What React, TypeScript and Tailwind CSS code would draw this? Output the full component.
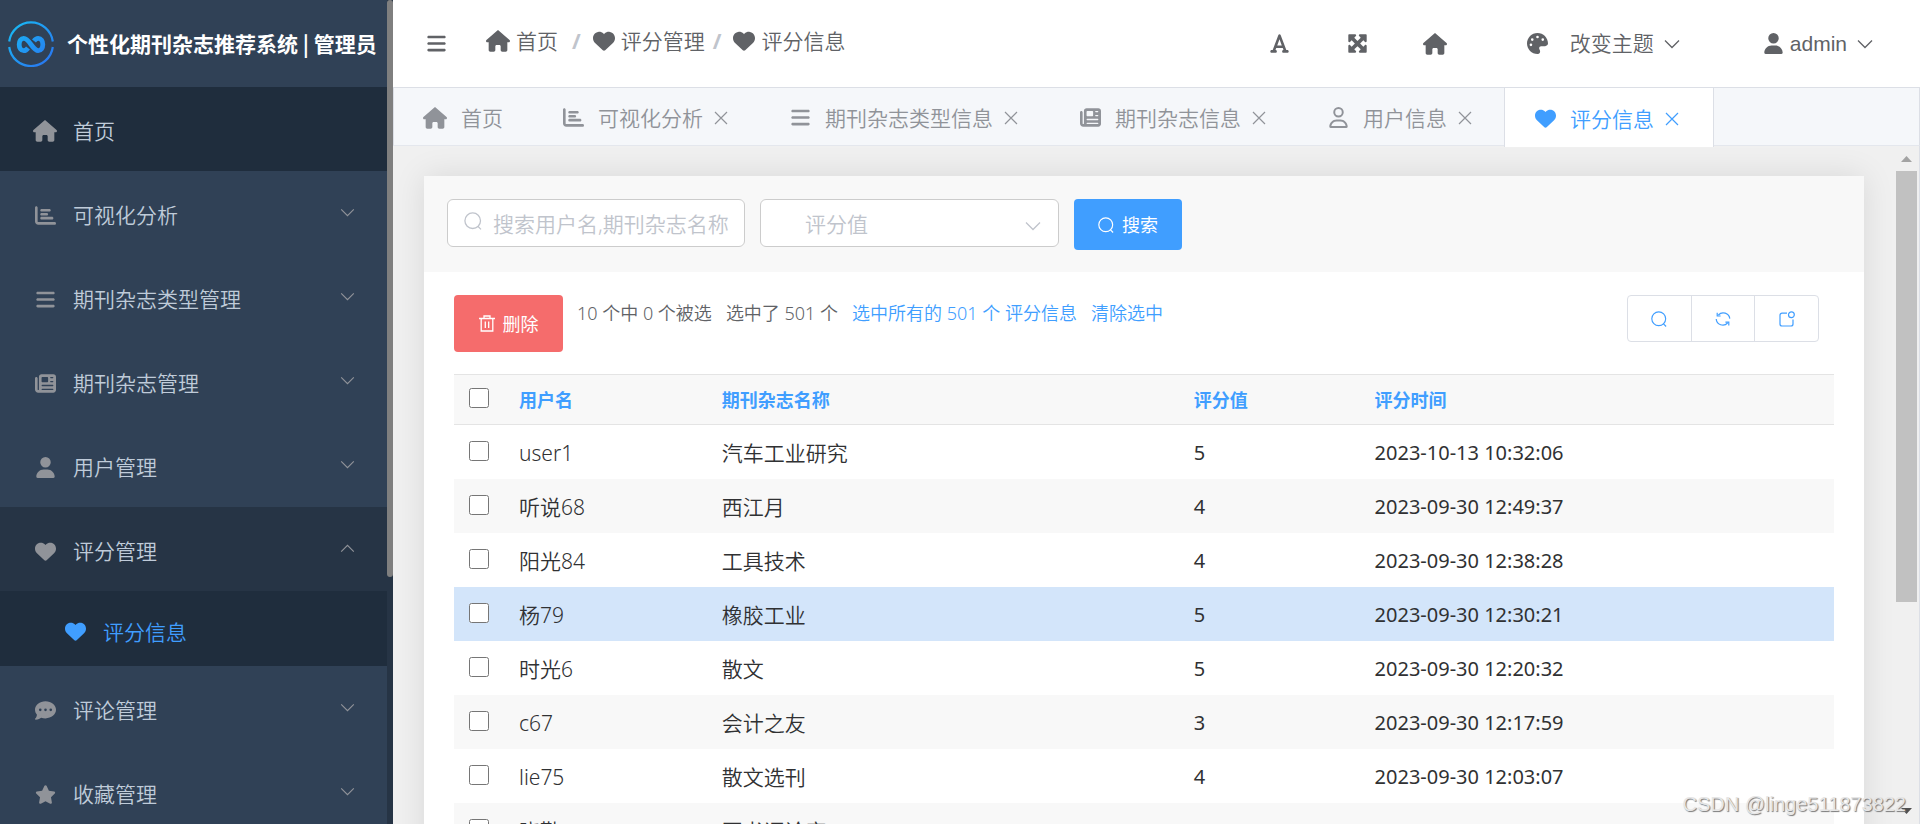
import React from "react";
import {
  FaHouse, FaChartBar, FaBars, FaNewspaper, FaUser, FaHeart, FaCommentDots,
  FaStar, FaFont, FaMaximize, FaPalette, FaRegUser,
} from "react-icons/fa6";
import type { IconType } from "react-icons";

function Home() {
  return <FaHouse className="h-6 w-6 shrink-0" />;
}

function Chevron({ className, up }: { className: string; up?: boolean }) {
  return (
    <svg viewBox="0 0 16 10" fill="none" stroke="currentColor" strokeWidth="1.3" className={className} aria-hidden="true">
      <path d={up ? "M1 8.5 8 1.5l7 7" : "M1 1.5l7 7 7-7"} />
    </svg>
  );
}

function Cross() {
  return (
    <svg viewBox="0 0 14 14" fill="none" stroke="currentColor" strokeWidth="1.2" className="h-3.5 w-3.5" aria-hidden="true">
      <path d="M1 1l12 12M13 1 1 13" />
    </svg>
  );
}

function Magnifier({ className }: { className: string }) {
  return (
    <svg viewBox="0 0 18 18" fill="none" stroke="currentColor" strokeWidth="1.3" className={className} aria-hidden="true">
      <circle cx="8.7" cy="8.7" r="7.8" />
      <path d="M13.8 14.2 17 17.4" />
    </svg>
  );
}

function Trash() {
  return (
    <svg viewBox="0 0 16 17" fill="none" stroke="currentColor" strokeWidth="1.3" className="h-[17px] w-4" aria-hidden="true">
      <path d="M0 3.5h16M5 3.5V1h6v2.5M2.2 3.5V16h11.6V3.5M6.3 6.5v6.5M9.7 6.5v6.5" />
    </svg>
  );
}

function Refresh() {
  return (
    <svg viewBox="0 0 16 16" fill="none" stroke="currentColor" strokeWidth="1.2" className="h-4 w-4" aria-hidden="true">
      <path d="M3.4 4A6.6 6.6 0 0 1 14.8 7.6M12.6 12A6.6 6.6 0 0 1 1.2 8M2.2 1.8V5h3.4M13.8 14.4v-3.2h-3.4" />
    </svg>
  );
}

function WindowBadge() {
  return (
    <svg viewBox="0 0 16 16" fill="none" stroke="currentColor" strokeWidth="1.2" className="h-4 w-4" aria-hidden="true">
      <path d="M8 2.2H3a2 2 0 0 0-2 2V13a2 2 0 0 0 2 2h9a2 2 0 0 0 2-2V8.4" />
      <circle cx="12.4" cy="3.8" r="2.9" />
    </svg>
  );
}

function Logo() {
  return (
    <svg viewBox="0 0 46 46" fill="none" className="h-[46px] w-[46px] shrink-0" aria-hidden="true">
      <defs>
        <linearGradient id="brand" x1="0" y1="0" x2="46" y2="46" gradientUnits="userSpaceOnUse">
          <stop stopColor="#17c0f5" />
          <stop offset="1" stopColor="#2b6ff0" />
        </linearGradient>
      </defs>
      <g stroke="url(#brand)">
        <path d="M1.2 20.5A22 22 0 0 1 44.8 20.5M1.2 26A22 22 0 0 0 44.8 26" strokeWidth="2.2" />
        <path
          d="M20 27c-1.2 1.7-2.6 2.6-4.2 2.6-2.9 0-4.6-2.8-4.6-6.1s1.7-6.1 4.6-6.1c5.6 0 8.8 12.2 14.4 12.2 2.9 0 4.6-2.8 4.6-6.1s-1.7-6.1-4.6-6.1c-1.6 0-3 .9-4.2 2.6"
          strokeWidth="4.8"
        />
      </g>
    </svg>
  );
}

type Item = { icon: IconType; label: string };

const menuTop: Item[] = [
  { icon: FaChartBar, label: "可视化分析" },
  { icon: FaBars, label: "期刊杂志类型管理" },
  { icon: FaNewspaper, label: "期刊杂志管理" },
  { icon: FaUser, label: "用户管理" },
];
const menuBottom: Item[] = [
  { icon: FaCommentDots, label: "评论管理" },
  { icon: FaStar, label: "收藏管理" },
];

function MenuRow({ icon: Icon, label, open }: Item & { open?: boolean }) {
  return (
    <button
      type="button"
      aria-expanded={!!open}
      className={`flex h-[84px] w-full shrink-0 items-center pt-1 pr-8 pl-[33px] text-left ${open ? "bg-[#263445]" : ""}`}
    >
      <span className="flex w-6 justify-center text-[#909399]">
        <Icon className="h-[21px] w-auto" />
      </span>
      <span className="ml-4 flex-1">{label}</span>
      <Chevron up={open} className="mb-1.5 h-[9px] w-[15px] text-[#909399]" />
    </button>
  );
}

const tabs: Item[] = [
  { icon: FaHouse, label: "首页" },
  { icon: FaChartBar, label: "可视化分析" },
  { icon: FaBars, label: "期刊杂志类型信息" },
  { icon: FaNewspaper, label: "期刊杂志信息" },
  { icon: FaRegUser, label: "用户信息" },
  { icon: FaHeart, label: "评分信息" },
];

function tabStyle(i: number) {
  if (i === 0) return "pr-[30px] pl-[29px]";
  if (i === tabs.length - 1) return "z-10 -mb-0.5 border-x border-[#dcdfe6] bg-white pr-[34px] pl-[30px] text-[#409eff]";
  return "pr-8 pl-[30px]";
}

const rows = [
  ["user1", "汽车工业研究", "5", "2023-10-13 10:32:06"],
  ["听说68", "西江月", "4", "2023-09-30 12:49:37"],
  ["阳光84", "工具技术", "4", "2023-09-30 12:38:28"],
  ["杨79", "橡胶工业", "5", "2023-09-30 12:30:21"],
  ["时光6", "散文", "5", "2023-09-30 12:20:32"],
  ["c67", "会计之友", "3", "2023-09-30 12:17:59"],
  ["lie75", "散文选刊", "4", "2023-09-30 12:03:07"],
  ["晓勤", "图书评论家", "", ""],
];

function rowColor(i: number) {
  if (i === 3) return "bg-[#d3e5fa]";
  return i % 2 ? "bg-[#f8f8f8]" : "bg-white";
}

export default function App() {
  return (
    <div className="relative flex h-screen overflow-hidden bg-[#f0f0f0] font-['Noto_Sans','Noto_Sans_CJK_SC',sans-serif] text-[21px] leading-8 font-[350]">
      <aside className="flex w-[393px] shrink-0 bg-[#263445]">
        <div className="flex min-w-0 flex-1 flex-col overflow-hidden bg-[#304156] text-[#bfcbd9]">
          <div className="flex h-[87px] shrink-0 items-center gap-[13px] pl-2 whitespace-nowrap text-white">
            <Logo />
            <h1 className="mb-0.5 font-['Noto_Sans_CJK_SC',sans-serif] font-bold">个性化期刊杂志推荐系统 | 管理员</h1>
          </div>
          <nav>
            <a href="#home" className="flex h-[84px] items-center bg-[#1f2d3d] pt-1 pl-[33px]">
              <span className="text-[#909399]">
                <Home />
              </span>
              <span className="ml-4">首页</span>
            </a>
            {menuTop.map((m) => (
              <MenuRow key={m.label} {...m} />
            ))}
            <MenuRow icon={FaHeart} label="评分管理" open />
            <a href="#rating" className="flex h-[75px] items-center bg-[#1f2d3d] pt-1.5 pl-[65px] text-[#409eff]">
              <FaHeart className="h-[21px] w-auto" />
              <span className="ml-[17px]">评分信息</span>
            </a>
            {menuBottom.map((m) => (
              <MenuRow key={m.label} {...m} />
            ))}
          </nav>
        </div>
        <div className="w-1.5">
          <div className="h-[70%] rounded-[3px] bg-[#7f7f7f]" />
        </div>
      </aside>

      <div className="flex min-w-0 flex-1 flex-col">
        <header className="flex h-[87px] shrink-0 items-center bg-white pr-[47px] pl-[33px] text-[#606266]">
          <button type="button" aria-label="折叠菜单">
            <FaBars className="h-[21px] w-auto" />
          </button>
          <nav aria-label="breadcrumb" className="mb-1.5 ml-[39px] flex items-center whitespace-nowrap">
            <a href="#home" className="flex items-center gap-1.5">
              <Home />首页
            </a>
            <span className="mr-3 ml-[14px] font-bold text-[#c0c4cc]">/</span>
            <a href="#ratings" className="flex items-center gap-1.5">
              <FaHeart className="h-[22px] w-auto" />评分管理
            </a>
            <span className="mr-3 ml-2 font-bold text-[#c0c4cc]">/</span>
            <a href="#rating" className="flex items-center gap-1.5">
              <FaHeart className="h-[22px] w-auto" />评分信息
            </a>
          </nav>
          <div className="ml-auto flex items-center whitespace-nowrap">
            <button type="button" aria-label="字体"><FaFont className="h-[21px] w-auto" /></button>
            <button type="button" aria-label="全屏" className="ml-[57px]"><FaMaximize className="h-[21px] w-auto" /></button>
            <a href="#home" aria-label="首页" className="ml-[55px]"><Home /></a>
            <button type="button" className="ml-20 flex items-center">
              <FaPalette className="h-[21px] w-auto" />
              <span className="mb-0.5 ml-[22px]">改变主题</span>
              <Chevron className="ml-2.5 h-2.5 w-4" />
            </button>
            <button type="button" className="ml-[83px] flex items-center font-['Liberation_Sans',sans-serif]">
              <FaUser className="h-[21px] w-auto" />
              <span className="ml-1.5">admin</span>
              <Chevron className="ml-2.5 h-2.5 w-4" />
            </button>
          </div>
        </header>

        <div className="flex h-[59px] shrink-0 border border-[#dcdfe6] border-b-[#e4e7ed] bg-[#f5f7fa] whitespace-nowrap text-[#909399]">
          {tabs.map(({ icon: Icon, label }, i) => (
            <div key={label} className={`flex items-center pt-0.5 ${tabStyle(i)}`}>
              <a href={`#tab-${i}`} className="flex items-center gap-3.5">
                {i === 0 ? <Home /> : <Icon className="h-[21px] w-auto" />}
                {label}
              </a>
              {i > 0 && (
                <button type="button" aria-label={`关闭${label}`} className="ml-[11px]">
                  <Cross />
                </button>
              )}
            </div>
          ))}
        </div>

        <div className="flex min-h-0 flex-1 border-r border-[#dcdfe6]">
          <main className="min-w-0 flex-1 overflow-hidden pt-[30px] pr-8 pl-[31px]">
            <section className="bg-white shadow-[0_0_30px_rgba(0,0,0,0.1)]">
              <form className="flex h-24 items-start gap-[15px] bg-[#f8f8f8] px-[23px] pt-[23px]">
                <label className="flex h-12 w-[298px] items-center gap-[11px] rounded-md border border-[#ccc] bg-white pl-4 text-[#c0c4cc]">
                  <Magnifier className="mb-1 h-[18px] w-[18px] shrink-0" />
                  <input
                    type="text"
                    aria-label="搜索"
                    placeholder="搜索用户名,期刊杂志名称"
                    className="w-full min-w-0 bg-transparent pt-0.5 outline-none placeholder:text-[#c0c4cc]"
                  />
                </label>
                <div className="relative h-12 w-[299px]">
                  <select
                    aria-label="评分值"
                    defaultValue=""
                    className="h-full w-full appearance-none rounded-md border border-[#ccc] bg-white pt-0.5 pl-11 text-[#c0c4cc]"
                  >
                    <option value="" disabled>评分值</option>
                    {["1", "2", "3", "4", "5"].map((v) => (
                      <option key={v}>{v}</option>
                    ))}
                  </select>
                  <Chevron className="pointer-events-none absolute top-[22px] right-[18px] h-2.5 w-4 text-[#c0c4cc]" />
                </div>
                <button type="button" className="flex h-[51px] w-[108px] items-center justify-center gap-2 rounded-[4px] bg-[#409eff] text-[18px] font-normal text-white">
                  <Magnifier className="h-4 w-4" />
                  搜索
                </button>
              </form>

              <div className="px-[30px] pt-[23px]">
                <div className="flex h-[79px] items-start text-[18px] whitespace-nowrap">
                  <button type="button" className="flex h-[57px] w-[109px] items-center justify-center gap-2 rounded-[4px] bg-[#f56c6c] font-normal text-white">
                    <Trash />
                    删除
                  </button>
                  <div className="ml-[14px] flex gap-[14px] pt-[2px] text-[#606266]">
                    <span>10 个中 0 个被选</span>
                    <span>选中了 501 个</span>
                    <a href="#all" className="text-[#409eff]">选中所有的 501 个 评分信息</a>
                    <a href="#clear" className="text-[#409eff]">清除选中</a>
                  </div>
                  <div className="mr-[15px] ml-auto flex h-[47px] w-48 divide-x divide-[#dcdfe6] rounded-[4px] border border-[#dcdfe6] text-[#409eff]">
                    <button type="button" aria-label="查找" className="flex flex-1 items-center justify-center"><Magnifier className="h-4 w-4" /></button>
                    <button type="button" aria-label="刷新" className="flex flex-1 items-center justify-center"><Refresh /></button>
                    <button type="button" aria-label="新窗口" className="flex flex-1 items-center justify-center"><WindowBadge /></button>
                  </div>
                </div>

                <table className="w-full table-fixed border-collapse text-left whitespace-nowrap text-[#303133]">
                  <colgroup>
                    <col className="w-[53px]" />
                    <col className="w-[14.7%]" />
                    <col className="w-[34.2%]" />
                    <col className="w-[13.1%]" />
                    <col />
                  </colgroup>
                  <thead>
                    <tr className="h-[50px] border-y border-[#e4e4e4] bg-[#f8f8f8] text-[18px] text-[#409eff]">
                      <th className="pl-[15px]">
                        <input type="checkbox" aria-label="全选" className="mb-1 block h-5 w-5" />
                      </th>
                      {["用户名", "期刊杂志名称", "评分值", "评分时间"].map((h) => (
                        <th key={h} className="pl-3 font-bold">{h}</th>
                      ))}
                    </tr>
                  </thead>
                  <tbody>
                    {rows.map(([user, journal, score, time], i) => (
                      <tr key={user} className={`h-[54px] ${rowColor(i)}`}>
                        <td className="pl-[15px]">
                          <input type="checkbox" aria-label={`选择 ${user}`} className="mb-0.5 block h-5 w-5" />
                        </td>
                        <td className="pt-0.5 pl-3">{user}</td>
                        <td className="pt-0.5 pl-3">{journal}</td>
                        <td className="pt-0.5 pl-3 text-[20px] font-normal">{score}</td>
                        <td className="pt-0.5 pl-3 text-[20px] font-normal">{time}</td>
                      </tr>
                    ))}
                  </tbody>
                </table>
              </div>
            </section>
          </main>
          <div className="mr-0.5 flex w-[21px] shrink-0 flex-col items-center">
            <svg viewBox="0 0 11 6" className="mt-[10px] mb-[9px] h-[6px] w-[11px] shrink-0" fill="#a3a3a3" aria-hidden="true">
              <path d="M0 6 5.5 0 11 6z" />
            </svg>
            <div className="h-[431px] w-full bg-[#c1c1c1]" />
            <svg viewBox="0 0 11 6" className="mt-auto mb-[10px] h-[6px] w-[11px] shrink-0" fill="#505050" aria-hidden="true">
              <path d="M0 0 5.5 6 11 0z" />
            </svg>
          </div>
        </div>
      </div>

      <p className="absolute right-[14px] bottom-1 z-20 font-['Liberation_Sans',sans-serif] text-[20px] text-[#e6e6e6] [text-shadow:1px_1px_1px_#777]">
        CSDN @linge511873822
      </p>
    </div>
  );
}
